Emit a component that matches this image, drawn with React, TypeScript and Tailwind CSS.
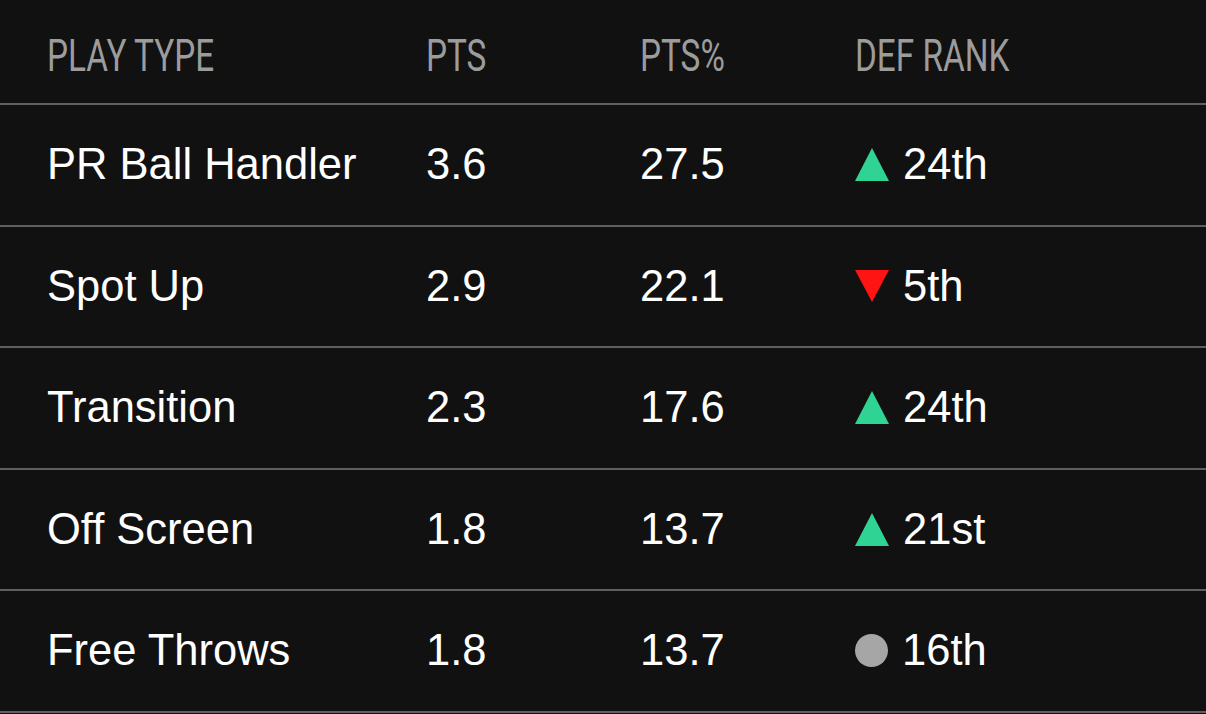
import React from "react";

type Trend = "up" | "down" | "flat";
const rows: { name: string; pts: string; pct: string; rank: string; trend: Trend }[] = [
  { name: "PR Ball Handler", pts: "3.6", pct: "27.5", rank: "24th", trend: "up" },
  { name: "Spot Up", pts: "2.9", pct: "22.1", rank: "5th", trend: "down" },
  { name: "Transition", pts: "2.3", pct: "17.6", rank: "24th", trend: "up" },
  { name: "Off Screen", pts: "1.8", pct: "13.7", rank: "21st", trend: "up" },
  { name: "Free Throws", pts: "1.8", pct: "13.7", rank: "16th", trend: "flat" },
];

function Indicator({ trend }: { trend: Trend }) {
  if (trend === "flat") {
    return <span className="block w-[33px] h-[33px] rounded-full bg-[#a6a6a6]" />;
  }
  return (
    <svg width="34" height="33" viewBox="0 0 34 33" className="block">
      {trend === "up" ? (
        <polygon points="17,0 34,33 0,33" fill="#2fd393" />
      ) : (
        <polygon points="0,0 34,0 17,32" fill="#ff1414" />
      )}
    </svg>
  );
}

function Head({ children }: { children: React.ReactNode }) {
  return (
    <span
      className="inline-block origin-left scale-x-[0.74] text-[45px] leading-none text-[#9c9c9c] whitespace-nowrap"
      style={{ fontFamily: "Roboto, 'Liberation Sans', sans-serif" }}
    >
      {children}
    </span>
  );
}

export default function App() {
  const grid = "grid grid-cols-[379px_214px_215px_1fr] pl-[47px] items-center";
  return (
    <div
      className="w-[1206px] h-[714px] bg-[#111111] overflow-hidden text-white"
      style={{ fontFamily: "'Liberation Sans', Arial, sans-serif" }}
    >
      <div className={`${grid} h-[105px] border-b-2 border-[#5f5f5f] pt-[7px]`}>
        <Head>PLAY TYPE</Head>
        <Head>PTS</Head>
        <Head>PTS%</Head>
        <Head>DEF RANK</Head>
      </div>
      {rows.map((r, i) => (
        <div
          key={i}
          className={`${grid} h-[121.5px] border-b-2 border-[#5f5f5f] text-[43.5px] leading-none`}
        >
          <span>{r.name}</span>
          <span>{r.pts}</span>
          <span>{r.pct}</span>
          <span className="flex items-center gap-[14px]">
            <Indicator trend={r.trend} />
            <span>{r.rank}</span>
          </span>
        </div>
      ))}
    </div>
  );
}
